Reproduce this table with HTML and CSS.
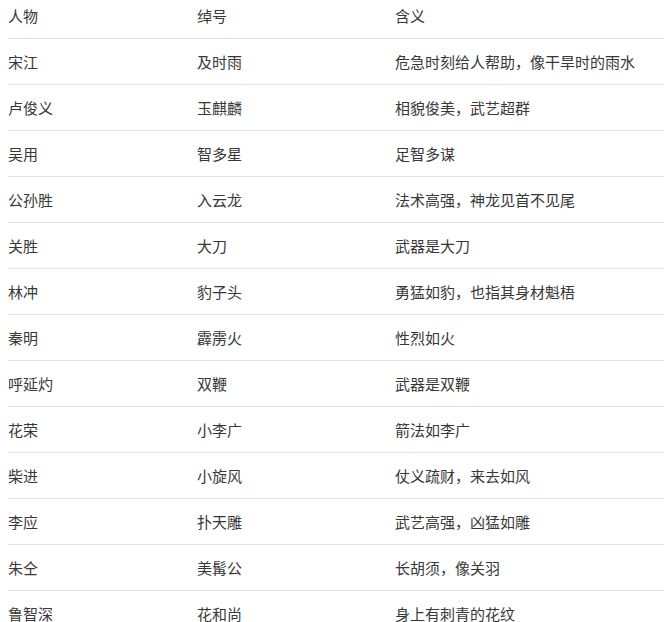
FILE: index.html
```html
<!DOCTYPE html>
<html lang="zh">
<head>
<meta charset="utf-8">
<link rel="stylesheet" href="styles.css">
</head>
<body>
<div class="table">
  <div class="row head"><span>人物</span><span>绰号</span><span>含义</span></div>
  <div class="row"><span>宋江</span><span>及时雨</span><span>危急时刻给人帮助<b class="p">，</b>像干旱时的雨水</span></div>
  <div class="row"><span>卢俊义</span><span>玉麒麟</span><span>相貌俊美<b class="p">，</b>武艺超群</span></div>
  <div class="row"><span>吴用</span><span>智多星</span><span>足智多谋</span></div>
  <div class="row"><span>公孙胜</span><span>入云龙</span><span>法术高强<b class="p">，</b>神龙见首不见尾</span></div>
  <div class="row"><span>关胜</span><span>大刀</span><span>武器是大刀</span></div>
  <div class="row"><span>林冲</span><span>豹子头</span><span>勇猛如豹<b class="p">，</b>也指其身材魁梧</span></div>
  <div class="row"><span>秦明</span><span>霹雳火</span><span>性烈如火</span></div>
  <div class="row"><span>呼延灼</span><span>双鞭</span><span>武器是双鞭</span></div>
  <div class="row"><span>花荣</span><span>小李广</span><span>箭法如李广</span></div>
  <div class="row"><span>柴进</span><span>小旋风</span><span>仗义疏财<b class="p">，</b>来去如风</span></div>
  <div class="row"><span>李应</span><span>扑天雕</span><span>武艺高强<b class="p">，</b>凶猛如雕</span></div>
  <div class="row"><span>朱仝</span><span>美髯公</span><span>长胡须<b class="p">，</b>像关羽</span></div>
  <div class="row"><span>鲁智深</span><span>花和尚</span><span>身上有刺青的花纹</span></div>
</div>
</body>
</html>
```

FILE: styles.css
```css
html, body {
  margin: 0;
  padding: 0;
  background: #fff;
}
body {
  padding-left: 8px;
  font-family: "Noto Sans CJK SC", "Noto Sans", sans-serif;
  font-size: 15px;
  color: #383838;
  overflow: hidden;
}
.table {
  display: flex;
  flex-direction: column;
}
.row {
  display: grid;
  grid-template-columns: 189px 198px 1fr;
  height: 45px;
  line-height: 45px;
  border-top: 1px solid #e2e2e2;
  white-space: nowrap;
}
.row.head {
  height: 38px;
  line-height: 31px;
  border-top: none;
}
.p {
  font-weight: normal;
  font-family: "Noto Sans CJK TC", "Noto Sans CJK SC", sans-serif;
}
```
